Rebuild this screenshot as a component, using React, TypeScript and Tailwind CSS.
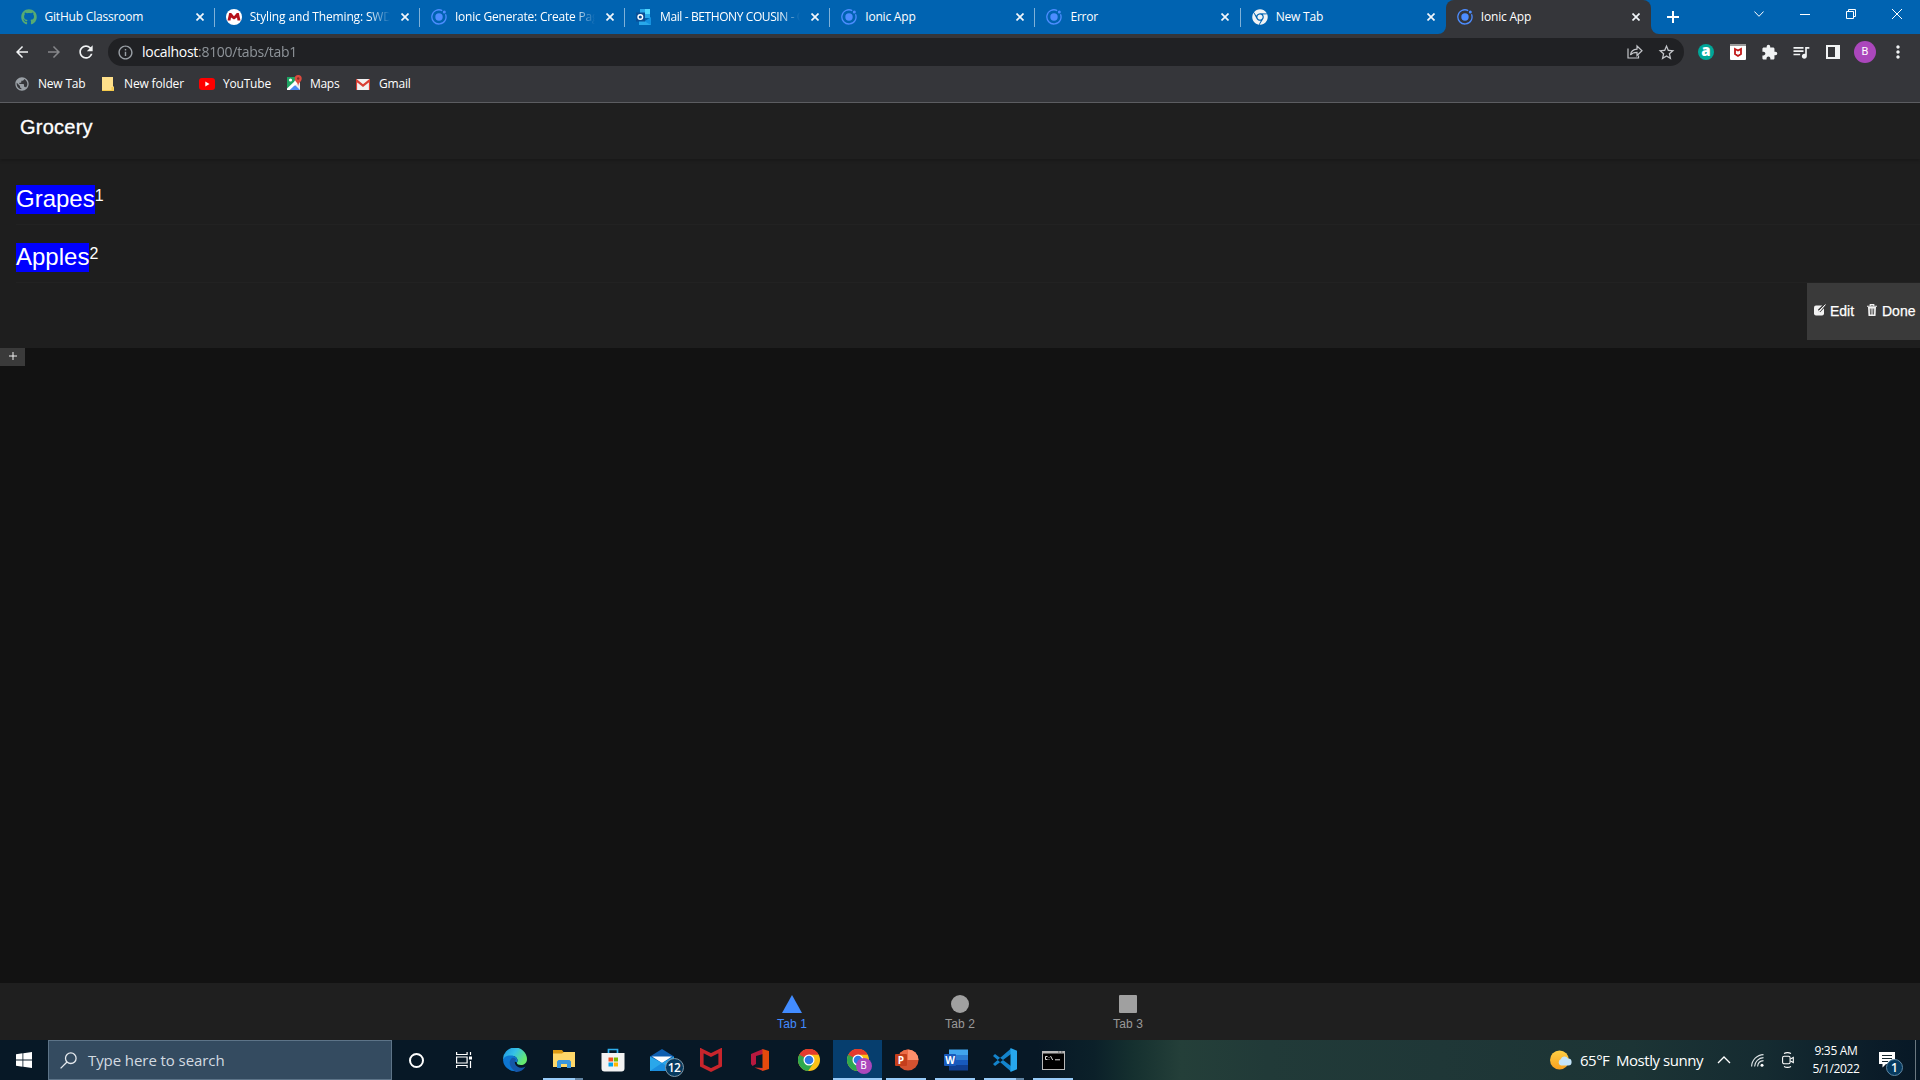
import React from "react";
import { FaGithub, FaChrome } from "react-icons/fa";
import {
  MdArrowBack,
  MdArrowForward,
  MdRefresh,
  MdInfoOutline,
  MdStarBorder,
  MdExtension,
  MdQueueMusic,
  MdMoreVert,
  MdPublic,
} from "react-icons/md";

type Node = React.ReactNode;

const IonicIcon = () => (
  <svg viewBox="0 0 16 16" className="size-4">
    <circle cx="8" cy="8" r="3.7" fill="#4d8dff" />
    <circle cx="13.3" cy="3" r="1.5" fill="#4d8dff" />
    <path d="M11.2 1.6A7.1 7.1 0 1 0 14.5 5.2" fill="none" stroke="#4d8dff" strokeWidth="1.3" />
  </svg>
);

const McGrawIcon = () => (
  <svg viewBox="0 0 16 16" className="size-4">
    <circle cx="8" cy="8" r="8" fill="#fff" />
    <path d="M1.5 11.5 3.2 4h2L8 7.2 10.8 4h2l1.7 7.5h-3l-.5-3L8 10.6 5 8.500l-.5 3z" fill="#b5121b" />
  </svg>
);

const OutlookIcon = () => (
  <svg viewBox="0 0 16 16" className="size-4">
    <path d="M4 0h10v9H4z" fill="#28a8ea" />
    <path d="M9 0h5v5H9z" fill="#50d9ff" />
    <path d="M3 8l6 4 6-4v8H3z" fill="#1490df" />
    <path d="M3 9l12 7H3z" fill="#28a8ea" />
    <rect x="0" y="3.500" width="9" height="9" fill="#0a4f96" />
    <circle cx="4.300" cy="8" r="2.300" fill="none" stroke="#fff" strokeWidth="1.4" />
  </svg>
);

const Cross = () => (
  <svg viewBox="0 0 8 8" className="size-2">
    <path d="M.5.5l7 7M7.500.5l-7 7" stroke="#f1f5fa" strokeWidth="1.7" />
  </svg>
);

const tabs: { title: string; icon: Node; fade?: boolean; cls: string }[] = [
  { title: "GitHub Classroom", icon: <FaGithub className="size-4 text-[#57ab72]" />, cls: "tracking-[-0.2px]" },
  { title: "Styling and Theming: SWDV", icon: <McGrawIcon />, fade: true, cls: "tracking-[-0.15px]" },
  { title: "Ionic Generate: Create Page", icon: <IonicIcon />, fade: true, cls: "tracking-[-0.2px]" },
  { title: "Mail - BETHONY COUSIN - O", icon: <OutlookIcon />, fade: true, cls: "tracking-[-0.4px]" },
  { title: "Ionic App", icon: <IonicIcon />, cls: "tracking-[-0.2px]" },
  { title: "Error", icon: <IonicIcon />, cls: "tracking-[-0.2px]" },
  { title: "New Tab", icon: <FaChrome className="size-4 text-[#f1f3f4]" />, cls: "tracking-[-0.2px]" },
  { title: "Ionic App", icon: <IonicIcon />, cls: "tracking-[-0.2px]" },
];

function TabStrip() {
  return (
    <div className="flex h-[34px] bg-[#0063b1] pl-[9.500px] text-white">
      {tabs.map((t, i) => {
        const active = i === 7;
        return (
          <div
            key={i}
            className={
              active
                ? "relative flex h-[34px] w-[205.200px] items-center rounded-t-lg bg-[#35363a] pl-[11px]"
                : "relative flex h-[34px] w-[205.200px] items-center pl-[11px]"
            }
          >
            {i > 0 && !active && <span className="absolute top-2 -left-px h-[19px] w-px bg-[#7fb1d8]" />}
            {active && (
              <>
                <svg viewBox="0 0 8 8" className="absolute bottom-0 -left-2 size-2">
                  <path d="M8 0v8H0A8 8 0 0 0 8 0z" fill="#35363a" />
                </svg>
                <svg viewBox="0 0 8 8" className="absolute -right-2 bottom-0 size-2">
                  <path d="M0 0v8h8A8 8 0 0 1 0 0z" fill="#35363a" />
                </svg>
              </>
            )}
            {t.icon}
            <div
              className={
                t.fade
                  ? "ml-2 w-[140px] overflow-hidden mask-r-from-85% mask-r-to-100%"
                  : "ml-2 w-[140px] overflow-hidden"
              }
            >
              <span className={"block text-[12px] leading-[18px] whitespace-nowrap " + t.cls}>{t.title}</span>
            </div>
            <div className="ml-[11px]">
              <Cross />
            </div>
          </div>
        );
      })}
      <div className="flex h-[34px] w-[43px] items-center justify-center">
        <svg viewBox="0 0 12 12" className="size-3">
          <path d="M6 0v12M0 6h12" stroke="#fff" strokeWidth="2" />
        </svg>
      </div>
      <div className="ml-auto flex h-7">
        <div className="flex w-[46px] items-center justify-center">
          <svg viewBox="0 0 10 6" className="h-1.5 w-2.5">
            <path d="M.4.5 5 5.300 9.600.5" fill="none" stroke="#fff" />
          </svg>
        </div>
        <div className="flex w-[46px] items-center justify-center">
          <span className="mt-px h-px w-2.5 bg-white" />
        </div>
        <div className="flex w-[46px] items-center justify-center">
          <svg viewBox="0 0 10 10" className="size-2.5" fill="none" stroke="#fff">
            <path d="M.5 2.500h7v7h-7zM2.500 2.500v-2h7v7h-2" />
          </svg>
        </div>
        <div className="flex w-[46px] items-center justify-center">
          <svg viewBox="0 0 10 10" className="size-2.5">
            <path d="M0 0l10 10M10 0L0 10" stroke="#fff" />
          </svg>
        </div>
      </div>
    </div>
  );
}

function AddressRow() {
  return (
    <div className="flex h-9 items-center bg-[#35363a] text-[#f1f3f4]">
      <div className="flex w-[108px] items-center pl-[13px]">
        <MdArrowBack className="size-[18px]" />
        <MdArrowForward className="ml-[14px] size-[18px] text-[#86878a]" />
        <MdRefresh className="ml-[13px] size-5" />
      </div>
      <div className="flex h-7 w-[1576px] items-center rounded-full bg-[#202124] pl-[9px]">
        <MdInfoOutline className="size-[17px] text-[#9aa0a6]" />
        <span className="ml-2 text-[14px] leading-5 tracking-[-0.29px] text-white">
          localhost<span className="text-[#9aa0a6] opacity-90">:8100/tabs/tab1</span>
        </span>
        <svg viewBox="0 0 16 16" className="ml-auto size-4" fill="none" stroke="#c3c5c9" strokeWidth="1.2">
          <path d="M1 4.500V14h10.500v-2.500" />
          <path d="M3.500 11C4 7.500 6 5.300 10 5.200V2l5 4.800-5 4.700V8.300C7 8.300 5 9 3.500 11z" />
        </svg>
        <MdStarBorder className="mr-2 ml-[14px] size-[19px] text-[#c3c5c9]" />
      </div>
      <div className="ml-[14px] flex size-4 items-center justify-center rounded-full bg-[#00a698] font-['Open_Sans'] text-[15px] leading-none font-extrabold text-white">
        <span className="-mt-[3px]">a</span>
      </div>
      <svg viewBox="0 0 16 16" className="ml-4 size-4">
        <rect width="16" height="16" rx="1" fill="#fff" />
        <path d="M0 0h16v2H0z" fill="#9b9b9b" />
        <path d="M5 5l3 1.500L11 5v5l-3 2-3-2z" fill="none" stroke="#c01818" strokeWidth="1.8" />
      </svg>
      <MdExtension className="ml-[15px] size-[17px]" />
      <MdQueueMusic className="ml-[13px] size-5" />
      <svg viewBox="0 0 14 14" className="ml-[15px] size-3.5">
        <path d="M0 0h14v14H0z" fill="#f1f3f4" />
        <path d="M2 2h7v10H2z" fill="#35363a" />
      </svg>
      <div className="ml-3.5 flex size-[22px] items-center justify-center rounded-full bg-[#ab47bc] font-[Roboto] text-[11px] text-white">
        B
      </div>
      <MdMoreVert className="ml-3 size-5" />
    </div>
  );
}

function BookmarksBar() {
  return (
    <div className="flex h-[33px] items-center border-b border-[#5d5e62] bg-[#35363a] pb-1 text-[12px] leading-[18px] whitespace-nowrap text-white">
      <div className="flex w-[102px] items-center pl-[14px]">
        <MdPublic className="size-4 text-[#9aa0a6]" />
        <span className="ml-2 tracking-[-0.2px]">New Tab</span>
      </div>
      <div className="flex w-[97px] items-center">
        <svg viewBox="0 0 12 14" className="h-3.5 w-3">
          <path d="M0 0h11v9.500h1V14H0z" fill="#ffe08a" />
          <path d="M0 13h12v1H0zM9.500 10h2v4h-2z" fill="#f5ca4b" />
        </svg>
        <span className="ml-2.5 tracking-[-0.15px]">New folder</span>
      </div>
      <div className="flex w-[88px] items-center">
        <svg viewBox="0 0 16 12" className="h-3 w-4">
          <rect width="16" height="12" rx="3" fill="#f00" />
          <path d="M6.300 3.500v5L10.500 6z" fill="#fff" />
        </svg>
        <span className="ml-2 tracking-[-0.2px]">YouTube</span>
      </div>
      <div className="flex w-[69px] items-center">
        <svg viewBox="0 0 16 16" className="-mt-0.5 size-4">
          <path d="M0 2h13v13H0z" fill="#e8eaed" />
          <path d="M0 2h9L7 8l-7 7z" fill="#1fa463" />
          <path d="M2 15l5.500-5.500L13 15z" fill="#4a89f3" />
          <path d="M0 13.500 9 5l2 3-8 7H0z" fill="#fff" />
          <path d="M3 15l4.500-4.500L12 15z" fill="#4a89f3" />
          <circle cx="3.500" cy="5" r="1.600" fill="#fff" />
          <path d="M11.200 0a3.500 3.500 0 0 0-3.500 3.500c0 3 3 3.500 3.500 7.500.5-4 3.500-4.500 3.500-7.500A3.500 3.500 0 0 0 11.200 0z" fill="#dd4b3e" />
          <circle cx="11.200" cy="3.500" r="1.200" fill="#822f2b" />
        </svg>
        <span className="ml-[7px] tracking-[-0.3px]">Maps</span>
      </div>
      <div className="flex items-center">
        <svg viewBox="0 0 14 11" className="h-[11px] w-3.5">
          <rect width="14" height="11" rx="1" fill="#f2f2f2" />
          <path d="M0 11V1l7 5.500L14 1v10" fill="none" stroke="#d93f34" strokeWidth="2.200" />
        </svg>
        <span className="ml-[9px] tracking-[-0.2px]">Gmail</span>
      </div>
    </div>
  );
}

function GroceryItem({ name, count }: { name: string; count: number }) {
  return (
    <div className="flex h-[58px] pl-4">
      <div className="flex flex-1 items-start border-b border-[#222222] pt-[18px]">
        <h2 className="flex h-[28.500px] items-center bg-[#0000ff] text-[24px] leading-none text-white">{name}</h2>
        <span className="mt-[2px] text-[16px] leading-[18px] text-white">{count}</span>
      </div>
    </div>
  );
}

function Page() {
  return (
    <main className="flex h-[937px] flex-col bg-[#121212] font-['Liberation_Sans',Arial,sans-serif]">
      <header className="relative flex h-14 items-center bg-[#1f1f1f] pl-5 text-[20px] tracking-[0.25px] text-white shadow-[0_2px_3px_rgba(0,0,0,0.18)] [-webkit-text-stroke:0.300px_white]">
        <h1 className="-mt-[9px]">Grocery</h1>
      </header>
      <section className="flex flex-col bg-[#1e1e1e] py-2">
        <GroceryItem name="Grapes" count={1} />
        <GroceryItem name="Apples" count={2} />
        <div className="flex h-[57px] justify-end">
          <div className="flex w-[113px] items-center bg-[#3a3a3a] pl-[7px] text-[14px] text-white [-webkit-text-stroke:0.250px_white]">
            <svg viewBox="0 0 12 12" className="-mt-[3px] size-3">
              <rect x="0" y="1.500" width="10" height="10" rx="2" fill="#f2f2f2" />
              <path d="M11.500.5 5 7" stroke="#3a3a3a" strokeWidth="3.200" />
              <path d="M11.300.7 5 7l-.8 1.200L5.500 7.500z" stroke="#f2f2f2" strokeWidth="1" />
            </svg>
            <span className="ml-1 w-[37px]">Edit</span>
            <svg viewBox="0 0 10 12" className="-mt-[3px] h-3 w-2.5" fill="none">
              <path d="M0 2.200h10M3.200 2V.6h3.600V2" stroke="#f2f2f2" strokeWidth="1.100" />
              <path d="M1 3h8l-.5 9h-7z" fill="#f2f2f2" />
              <path d="M3.300 4.500l.2 6M5 4.500v6M6.700 4.500l-.2 6" stroke="#3a3a3a" strokeWidth=".8" />
            </svg>
            <span className="ml-[5px]">Done</span>
          </div>
        </div>
      </section>
      <button className="flex h-[18px] w-[25px] justify-center bg-[#3a3a3a] pt-1">
        <svg viewBox="0 0 8 8" className="size-2">
          <path d="M4 0v8M0 4h8" stroke="#f2f2f2" />
        </svg>
      </button>
      <nav className="mt-auto flex h-[57px] justify-center bg-[#1f1f1f] text-[12px] leading-[14px] text-[#999999]">
        <div className="flex w-[168px] flex-col items-center pt-3 text-[#428cff]">
          <svg viewBox="0 0 20 18" className="h-[18px] w-5">
            <path d="M10 0l10 18H0z" fill="#428cff" />
          </svg>
          <span className="mt-[4px] tracking-[0.100px]">Tab 1</span>
        </div>
        <div className="flex w-[168px] flex-col items-center pt-3">
          <span className="size-[18px] rounded-full bg-[#a0a0a0]" />
          <span className="mt-[4px] tracking-[0.100px]">Tab 2</span>
        </div>
        <div className="flex w-[168px] flex-col items-center pt-3">
          <span className="size-[18px] rounded-[1px] bg-[#a0a0a0]" />
          <span className="mt-[4px] tracking-[0.100px]">Tab 3</span>
        </div>
      </nav>
    </main>
  );
}

const Chrome = () => (
  <svg viewBox="0 0 24 24" className="size-[22px]">
    <circle cx="12" cy="12" r="12" fill="#fbc116" />
    <path d="M1.600 6A12 12 0 0 1 22.400 6H12z" fill="#e33b2e" />
    <path d="M1.600 6A12 12 0 0 0 11 23.960l6.200-9L12 12z" fill="#2da94f" />
    <path d="M1.600 6 7 15l5-9V3z" fill="#e33b2e" />
    <path d="M1.600 6 6.800 15l2 2 3-5z" fill="#2da94f" />
    <path d="M1.600 6A12 12 0 0 1 22.400 6H12L6.800 9z" fill="#e33b2e" />
    <circle cx="12" cy="12" r="6" fill="#fff" />
    <circle cx="12" cy="12" r="4.700" fill="#2b78e4" />
  </svg>
);

const EdgeIcon = () => (
  <svg viewBox="0 0 24 24" className="size-6">
    <defs>
      <linearGradient id="edgeTop" x1="0" y1="0" x2="1" y2=".5">
        <stop offset="0" stopColor="#1b8fe0" />
        <stop offset=".5" stopColor="#35c1e8" />
        <stop offset="1" stopColor="#66eb6e" />
      </linearGradient>
    </defs>
    <path d="M0 12A12 12 0 0 1 24 11c0 4-3 6-6 6-3 0-5-1-3.800-3C15.500 11 13 8 9 8 4 8 1 10 0 12z" fill="url(#edgeTop)" />
    <path d="M0 12C1 8.500 4.500 7.500 8 7.500c4 0 6.500 2.500 6.500 5 0 .8-.5 1-.5 2-6-4-8 5 0 8.500A12 12 0 0 1 0 12z" fill="#0d76d1" />
    <path d="M9 10c-4 3-3 10 4 13.900 4 .3 7.500-1.900 9.500-5.400-4 2.500-9.500 1-10.500-3-.5-2 .3-3 1-3.700C12.500 10 10.500 9.400 9 10z" fill="#1557a8" />
  </svg>
);

const FolderIcon = () => (
  <svg viewBox="0 0 22 18" className="mb-0.5 h-[18px] w-[22px]">
    <path d="M0 0h9l1.500 2H22v5H0z" fill="#dd9a12" />
    <path d="M0 3.500h9L11 2h11v15H0z" fill="#ffd869" />
    <path d="M4 18v-6.500L5.500 10h11l1.500 1.500V18h-4v-4H8v4z" fill="#3a96dd" />
  </svg>
);

const StoreIcon = () => (
  <svg viewBox="0 0 24 24" className="size-6">
    <path d="M7.500 6V1.500h9V6" fill="none" stroke="#2fb0ee" strokeWidth="1.700" />
    <path d="M.5 5h23v15.500a3 3 0 0 1-3 3h-17a3 3 0 0 1-3-3z" fill="#f3f3f3" />
    <path d="M7.500 9.500H12v4H7.500z" fill="#f25022" />
    <path d="M12.800 9.500h4.200v4h-4.200z" fill="#7fba00" />
    <path d="M7.500 14.500H12v4H7.500z" fill="#00a4ef" />
    <path d="M12.800 14.500h4.200v4h-4.200z" fill="#ffb900" />
  </svg>
);

const MailIcon = () => (
  <span className="relative">
    <svg viewBox="0 0 24 24" className="size-6">
      <path d="M0 8.500 12 1l12 7.500V23H0z" fill="#0f5fb0" />
      <path d="M2 8.500h20L12 15z" fill="#fff" />
      <path d="M0 8.500 12 15l12-6.500V23H0z" fill="#2aa7ea" />
      <path d="M0 23 12 15l12 8z" fill="#1b8ede" />
    </svg>
    <span className="absolute top-[10px] left-[15px] flex size-[19px] items-center justify-center rounded-full border border-[#7d97a8] bg-[#063a5f] text-[12px] leading-none font-semibold tracking-[-0.500px] text-white">
      12
    </span>
  </span>
);

const McAfeeIcon = () => (
  <svg viewBox="0 0 22 24" className="h-6 w-[22px]">
    <path d="M1.800 2.500 11 7l9.200-4.500v15L11 22l-9.200-4.500z" fill="none" stroke="#c8252c" strokeWidth="3.600" />
  </svg>
);

const OfficeIcon = () => (
  <svg viewBox="0 0 18 22" className="h-[22px] w-[18px]">
    <path d="M0 5 12 0v5L5 7v8l-3.500 2L0 15z" fill="#b8193f" />
    <path d="M11.500 0 18 2v18l-6.500 2z" fill="#e64a0c" />
    <path d="M3.500 18.500 12 19v3z" fill="#d83b2a" />
  </svg>
);

const PowerPointIcon = () => (
  <svg viewBox="0 0 24 24" className="size-6">
    <circle cx="13" cy="12" r="10.500" fill="#d35230" />
    <path d="M13 1.500A10.500 10.500 0 0 1 23.500 12H13z" fill="#ff8f6b" />
    <path d="M2.500 12A10.500 10.500 0 0 1 13 1.500V12z" fill="#ed6c47" />
    <rect x="0" y="6" width="12" height="12" rx="1" fill="#c43e1c" />
    <text x="6" y="15.500" fontSize="10" fontWeight="700" textAnchor="middle" fill="#fff">P</text>
  </svg>
);

const WordIcon = () => (
  <svg viewBox="0 0 24 24" className="size-6">
    <path d="M5 1.500h19V7H5z" fill="#41a5ee" />
    <path d="M5 7h19v5H5z" fill="#2b7cd3" />
    <path d="M5 12h19v5H5z" fill="#185abd" />
    <path d="M5 17h19v5.500H5z" fill="#103f91" />
    <rect x="0" y="6" width="12" height="12" rx="1" fill="#185abd" />
    <text x="6" y="15.500" fontSize="10" fontWeight="700" textAnchor="middle" fill="#fff">W</text>
  </svg>
);

const CodeIcon = () => (
  <svg viewBox="0 0 24 24" className="size-6">
    <path d="M0 8l2-2 16 12v5.500zM0 16l2 2L18 6V.5z" fill="#1484cc" />
    <path d="M17.500 0 24 2.800v18.400L17.500 24z" fill="#27a7ee" />
  </svg>
);

const TerminalIcon = () => (
  <svg viewBox="0 0 23 19" className="h-[19px] w-[23px]">
    <rect width="23" height="19" fill="#b9b9b9" />
    <path d="M1 2.500h21V18H1z" fill="#000" />
    <path d="M16 1h1.500M19 1h1.500" stroke="#555" />
    <path d="M5.500 5.500H3.500v3h2M7 6v.7M7 8v.7M8.500 5l2.200 4M13 8.800h5" stroke="#ddd" strokeWidth="1" fill="none" />
  </svg>
);

type App = { icon: Node; open?: boolean; stacked?: boolean; active?: boolean };
const apps: App[] = [
  { icon: <EdgeIcon /> },
  { icon: <FolderIcon />, open: true, stacked: true },
  { icon: <StoreIcon /> },
  { icon: <MailIcon /> },
  { icon: <McAfeeIcon /> },
  { icon: <OfficeIcon /> },
  { icon: <Chrome /> },
  {
    icon: (
      <span className="relative">
        <Chrome />
        <span className="absolute top-[9px] left-[9px] flex size-4 items-center justify-center rounded-full bg-[#ab47bc] font-[Roboto] text-[10px] leading-none text-white">
          B
        </span>
      </span>
    ),
    active: true,
  },
  { icon: <PowerPointIcon />, open: true },
  { icon: <WordIcon />, open: true },
  { icon: <CodeIcon />, open: true, stacked: true },
  { icon: <TerminalIcon />, open: true },
];

function Taskbar() {
  return (
    <footer className="flex h-10 bg-linear-[90deg,#071826_0%,#071826_54%,#0b2029_57%,#15302f_59%,#243f39_61.500%,#213a38_66%,#1f3737_75%,#1c3435_85%,#152b31_92%,#0a1b28_98%,#071826_100%] text-white">
      <div className="flex w-12 items-center justify-center">
        <svg viewBox="0 0 16 16" className="size-4" fill="#fff">
          <path d="M0 2.200 6.500 1.300v6.300H0zM7.300 1.200 16 0v7.600H7.300zM0 8.400h6.500v6.300L0 13.800zM7.300 8.400H16V16l-8.700-1.200z" />
        </svg>
      </div>
      <div className="flex w-[344px] items-center border border-[#5d7488] bg-[#344b60] pl-[11px]">
        <svg viewBox="0 0 17 17" className="size-[17px]" fill="none" stroke="#e6eaee" strokeWidth="1.300">
          <circle cx="10.800" cy="6.200" r="5.300" />
          <path d="M7 10 .6 16.400" />
        </svg>
        <span className="ml-[11px] text-[15px] leading-5 tracking-[-0.080px] text-[#d3dae0]">Type here to search</span>
      </div>
      <div className="flex w-12 items-center justify-center">
        <span className="size-[15px] rounded-full border-2 border-white" />
      </div>
      <div className="flex w-12 items-center justify-center">
        <svg viewBox="0 0 16 16" className="size-4" fill="none" stroke="#fff" strokeWidth="1.200">
          <path d="M.6 0v2.500h10.500V0M.6 16v-2.500h10.500V16M.6 5h10.500v6H.6zM14.500 0v3M14.500 9v7" />
          <path d="M13 4.500h3v3h-3z" fill="#fff" stroke="none" />
        </svg>
      </div>
      <div className="ml-[2px] flex">
        {apps.map((a, i) => (
          <div
            key={i}
            className={
              a.active
                ? "relative flex w-[49px] items-center justify-center bg-[#063e6e]"
                : "relative flex w-[49px] items-center justify-center"
            }
          >
            {a.icon}
            {a.active && <span className="absolute inset-x-0 bottom-0 h-0.5 bg-[#98cbf8]" />}
            {a.open && <span className="absolute bottom-0 left-1 h-0.5 w-10 bg-[#98cbf8]" />}
            {a.stacked && <span className="absolute bottom-0 left-9 h-0.5 w-2 bg-[#6184a3]" />}
          </div>
        ))}
      </div>
      <div className="ml-auto flex items-center">
        <svg viewBox="0 0 22 20" className="h-5 w-[22px]">
          <defs>
            <linearGradient id="sun" x1="0" y1="0" x2="0" y2="1">
              <stop offset="0" stopColor="#ffcf45" />
              <stop offset="1" stopColor="#f9a01e" />
            </linearGradient>
          </defs>
          <circle cx="9.500" cy="10" r="9.500" fill="url(#sun)" />
          <path d="M11 15.500a3.300 3.300 0 0 1-.3-6.200 4 4 0 0 1 7.300-.8 3.500 3.500 0 0 1 .2 7z" fill="#c5e4fa" />
        </svg>
        <span className="ml-2 w-9 text-[15px] leading-5 tracking-[-0.500px]">65°F</span>
        <span className="w-[101px] text-[15px] leading-5 tracking-[-0.450px] whitespace-nowrap">Mostly sunny</span>
        <svg viewBox="0 0 14 8" className="h-2 w-3.5">
          <path d="M1 7l6-6 6 6" fill="none" stroke="#fff" strokeWidth="1.300" />
        </svg>
        <svg viewBox="0 0 13 13" className="ml-5 size-[13px]" fill="none" stroke="#dfe5e7" strokeWidth="1.100">
          <path d="M.6 12.500C.8 6 6 .8 12.500.6M3.600 12.500c.2-4.800 4-8.700 8.900-8.900M6.600 12.500c.2-3.300 2.600-5.700 5.900-5.900" />
          <circle cx="11" cy="11.300" r="1.500" fill="#fff" stroke="none" />
        </svg>
        <svg viewBox="0 0 12 16" className="ml-[18px] h-4 w-3" fill="none" stroke="#fff" strokeWidth="1.100">
          <path d="M2 1.500q3.500-1.800 7 0M2 14.500q3.500 1.800 7 0" />
          <rect x=".6" y="4.300" width="7.500" height="7.400" rx="1.500" />
          <path d="M8.500 7 11.300 5.500v5L8.500 9" />
        </svg>
        <div className="ml-3 flex w-[60px] flex-col items-center text-[12px] leading-[18px] whitespace-nowrap">
          <span className="tracking-[-0.300px]">9:35 AM</span>
          <span className="tracking-[-0.400px]">5/1/2022</span>
        </div>
        <div className="relative ml-[13px] h-4 w-4">
          <svg viewBox="0 0 16 16" className="size-4">
            <path d="M0 0h16v12H7l-3.500 3.500V12H0z" fill="#fff" />
            <path d="M3 3.500h10M3 6.500h10M3 9.500h6" stroke="#15272f" />
          </svg>
          <span className="absolute top-[7px] left-[7px] flex size-[17px] items-center justify-center rounded-full border border-[#5f87a3] bg-[#063a5f] text-[12px] leading-none font-semibold">
            1
          </span>
        </div>
        <span className="ml-5 h-10 w-px bg-[#6b7880]" />
        <span className="w-1" />
      </div>
    </footer>
  );
}

export default function App() {
  return (
    <div className="flex h-[1080px] w-[1920px] flex-col overflow-hidden font-['Open_Sans','Noto_Sans',sans-serif]">
      <TabStrip />
      <AddressRow />
      <BookmarksBar />
      <Page />
      <Taskbar />
    </div>
  );
}
